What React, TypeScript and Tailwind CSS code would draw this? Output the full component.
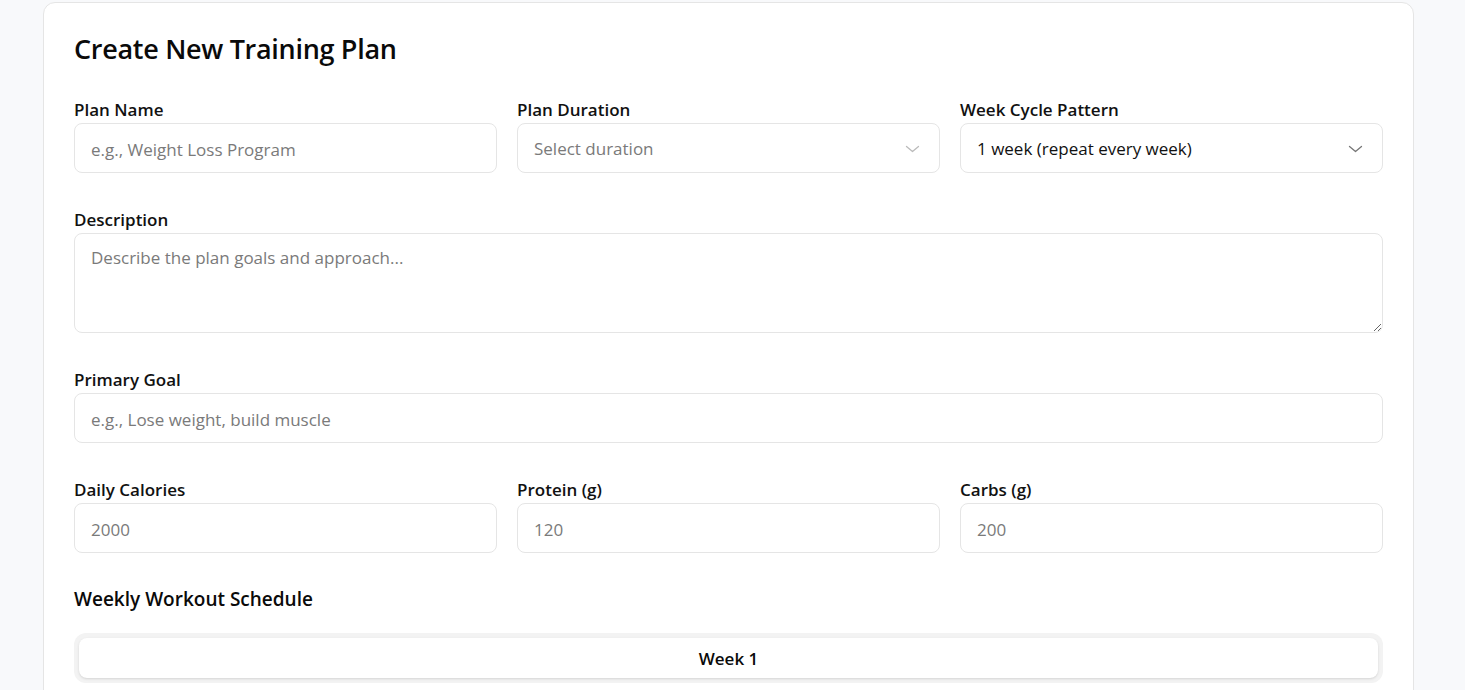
const inputCls =
  "block w-full h-[50px] rounded-lg border border-[#e5e5e5] bg-white px-4 pt-[2px] text-[17px] text-[#111] placeholder:text-[#7a7a7a] outline-none"

function Field({ label, children }: { label: string; children: React.ReactNode }) {
  return (
    <div>
      <label className="block text-[17px] leading-[22px] pb-[2px] font-semibold text-[#111]">{label}</label>
      {children}
    </div>
  )
}

function SelectBox({ value, placeholder }: { value?: string; placeholder?: string }) {
  return (
    <div className="flex h-[50px] items-center justify-between rounded-lg border border-[#e5e5e5] bg-white pl-4 pr-[19px] pt-[2px]">
      <span className={value ? "text-[17px] text-[#111]" : "text-[17px] text-[#7a7a7a]"}>{value ?? placeholder}</span>
      <svg width="15" height="8" viewBox="0 0 15 8" fill="none" className={value ? "text-[#777]" : "text-[#bbb]"}>
        <path d="M1.5 1.5 L7.5 6.5 L13.5 1.5" stroke="currentColor" strokeWidth="1.3" strokeLinecap="round" strokeLinejoin="round" />
      </svg>
    </div>
  )
}

export default function App() {
  return (
    <div className="min-h-[690px] bg-[#f8f9fb] pt-[2px]" style={{ fontFamily: '"Open Sans", "Noto Sans", sans-serif' }}>
      <div className="ml-[43px] w-[1371px] rounded-xl border border-[#e5e5e5] bg-white px-[30px] pt-[28px] pb-8">
        <h2 className="text-[27px] leading-9 font-semibold text-[#0a0a0a] tracking-[-0.3px]">Create New Training Plan</h2>

        <div className="mt-[32px] space-y-9">
          <div className="grid grid-cols-3 gap-5">
            <Field label="Plan Name">
              <input className={inputCls} placeholder="e.g., Weight Loss Program" />
            </Field>
            <Field label="Plan Duration">
              <SelectBox placeholder="Select duration" />
            </Field>
            <Field label="Week Cycle Pattern">
              <SelectBox value="1 week (repeat every week)" />
            </Field>
          </div>

          <Field label="Description">
            <textarea
              className="block w-full h-[100px] rounded-lg border border-[#e5e5e5] bg-white px-4 py-[11px] text-[17px] text-[#111] placeholder:text-[#7a7a7a] outline-none"
              placeholder="Describe the plan goals and approach..."
            />
          </Field>

          <Field label="Primary Goal">
            <input className={inputCls} placeholder="e.g., Lose weight, build muscle" />
          </Field>

          <div className="grid grid-cols-3 gap-5">
            <Field label="Daily Calories">
              <input className={inputCls} placeholder="2000" />
            </Field>
            <Field label="Protein (g)">
              <input className={inputCls} placeholder="120" />
            </Field>
            <Field label="Carbs (g)">
              <input className={inputCls} placeholder="200" />
            </Field>
          </div>
        </div>

        <div className="mt-8">
          <h3 className="text-[19px] leading-7 font-semibold text-[#0a0a0a]">Weekly Workout Schedule</h3>
          <div className="mt-5 rounded-xl bg-[#f3f3f3] p-[5px]">
            <div className="flex h-10 items-center justify-center rounded-lg bg-white shadow-sm pt-px text-[17px] font-semibold text-[#0a0a0a]">
              Week 1
            </div>
          </div>
        </div>
      </div>
    </div>
  )
}
